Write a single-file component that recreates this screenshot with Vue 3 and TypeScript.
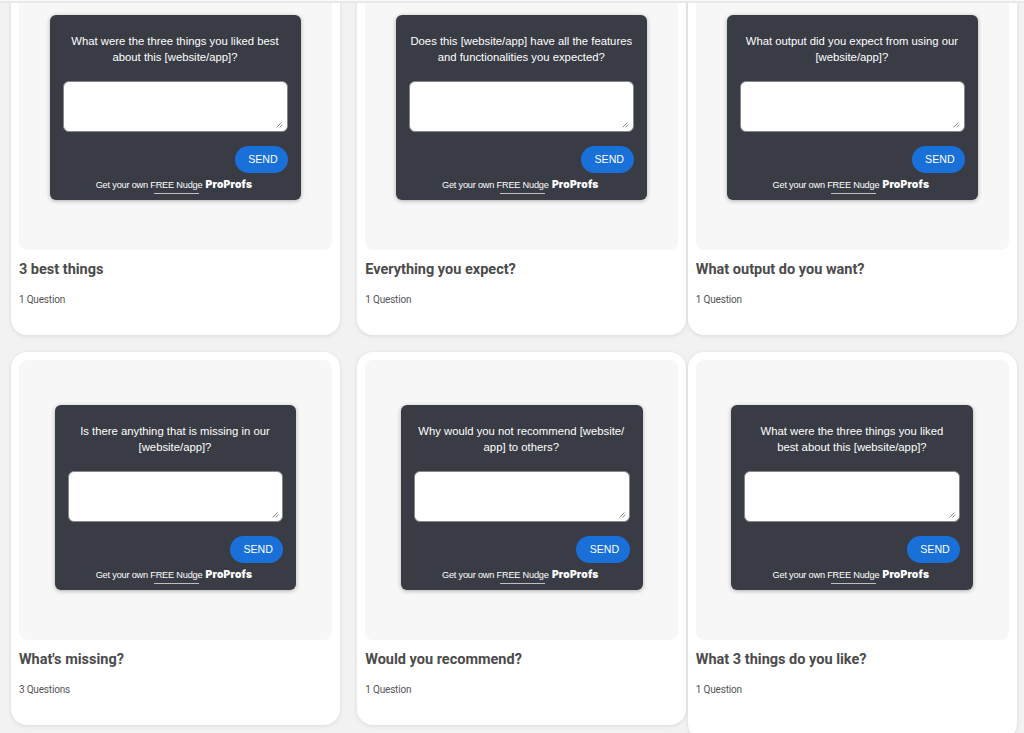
<script setup lang="ts">
interface Template {
  title: string
  count: string
  lines: [string, string]
  narrow: boolean
  tall?: boolean
}

const templates: Template[] = [
  { title: '3 best things', count: '1 Question', lines: ['What were the three things you liked best', 'about this [website/app]?'], narrow: false },
  { title: 'Everything you expect?', count: '1 Question', lines: ['Does this [website/app] have all the features', 'and functionalities you expected?'], narrow: false },
  { title: 'What output do you want?', count: '1 Question', lines: ['What output did you expect from using our', '[website/app]?'], narrow: false },
  { title: "What's missing?", count: '3 Questions', lines: ['Is there anything that is missing in our', '[website/app]?'], narrow: true },
  { title: 'Would you recommend?', count: '1 Question', lines: ['Why would you not recommend [website/', 'app] to others?'], narrow: true },
  { title: 'What 3 things do you like?', count: '1 Question', lines: ['What were the three things you liked', 'best about this [website/app]?'], narrow: true, tall: true },
]
</script>

<template>
  <div class="page">
    <header class="topbar"></header>
    <main class="viewport">
      <div class="grid">
        <article v-for="t in templates" :key="t.title" class="card" :class="{ tall: t.tall }">
          <div class="preview">
            <section class="nudge" :class="{ narrow: t.narrow }">
              <p class="question">{{ t.lines[0] }}<br />{{ t.lines[1] }}</p>
              <div class="answer">
                <svg class="grip" viewBox="0 0 7 6" width="7" height="6">
                  <path d="M0.6 5.4 L5.4 0.6 M3.6 5.4 L6.3 2.7" />
                </svg>
              </div>
              <button class="send">SEND</button>
              <div class="credit">
                <span class="get">Get your own <span class="free">FREE Nudge</span></span>
                <span class="brand">ProProfs</span>
              </div>
            </section>
          </div>
          <h2 class="title">{{ t.title }}</h2>
          <p class="count">{{ t.count }}</p>
        </article>
      </div>
    </main>
  </div>
</template>

<style>
body {
  margin: 0;
  background: #f2f2f2;
}
</style>

<style scoped>
.page {
  width: 1024px;
  height: 733px;
  overflow: hidden;
  background: #f2f2f2;
  font-family: Roboto, sans-serif;
}
.topbar {
  box-sizing: border-box;
  height: 3px;
  background: #fafafa;
  border-bottom: 2px solid #e9e9e9;
}
.viewport {
  height: 730px;
  overflow: hidden;
  display: flow-root;
}
.grid {
  display: grid;
  grid-template-columns: 346.3px 330.6px 330px;
  grid-auto-rows: 373px;
  row-gap: 17px;
  align-items: start;
  margin: -41px 0 0 10.9px;
}
.card {
  box-sizing: border-box;
  width: 329.2px;
  height: 373px;
  padding: 8px;
  border-radius: 16px;
  background: #fff;
  box-shadow: 0 1px 4px rgba(0, 0, 0, 0.1);
}
.card.tall {
  height: 388px;
}
.preview {
  box-sizing: border-box;
  height: 279.5px;
  padding-top: 45px;
  border-radius: 8px;
  background: #f7f7f7;
}
.nudge {
  box-sizing: border-box;
  display: flex;
  flex-direction: column;
  width: 251.4px;
  height: 185px;
  margin: 0 auto;
  padding: 18px 13px 0;
  border-radius: 6px;
  background: #393c45;
  box-shadow: 0 1px 4px rgba(0, 0, 0, 0.3);
  color: #fff;
  font-family: 'Liberation Sans', Arial, sans-serif;
}
.nudge.narrow {
  width: 241.8px;
}
.question {
  margin: 0 -7px 0 -8px;
  font-size: 11.3px;
  line-height: 16px;
  text-align: center;
  white-space: nowrap;
}
.answer {
  box-sizing: border-box;
  display: flex;
  align-items: flex-end;
  justify-content: flex-end;
  height: 51px;
  margin-top: 16px;
  padding: 0 4px 3.5px 0;
  border: 1px solid #85878a;
  border-radius: 6px;
  background: #fff;
}
.nudge.narrow .answer {
  padding-right: 3px;
}
.grip path {
  fill: none;
  stroke: #666;
  stroke-width: 0.8;
}
.send {
  align-self: flex-end;
  width: 53.5px;
  height: 27px;
  margin: 14px 0 0;
  padding: 0 0 0 3px;
  border: 0;
  border-radius: 14px;
  background: #1870d8;
  color: #fff;
  font-family: inherit;
  font-size: 10.6px;
  line-height: 27px;
  text-align: center;
}
.credit {
  display: flex;
  justify-content: center;
  align-items: baseline;
  gap: 3.2px;
  margin: 3.5px 3px 0 0;
  line-height: 14px;
  white-space: nowrap;
}
.get {
  font-size: 9.2px;
  letter-spacing: -0.2px;
}
.free {
  display: inline-block;
  background: linear-gradient(#bfc0c3, #bfc0c3) 3.5px 100% / 45px 1px no-repeat;
  padding-bottom: 2px;
}
.brand {
  font-family: Inter, sans-serif;
  font-size: 10.3px;
  font-weight: 900;
  letter-spacing: 0.22px;
}
.title {
  margin: 11px 0 0;
  color: #4b4b4b;
  font-size: 14.5px;
  font-weight: 700;
  line-height: 18px;
}
.count {
  margin: 14.5px 0 0;
  color: #555;
  font-size: 10px;
  letter-spacing: -0.17px;
  line-height: 14px;
}
</style>
